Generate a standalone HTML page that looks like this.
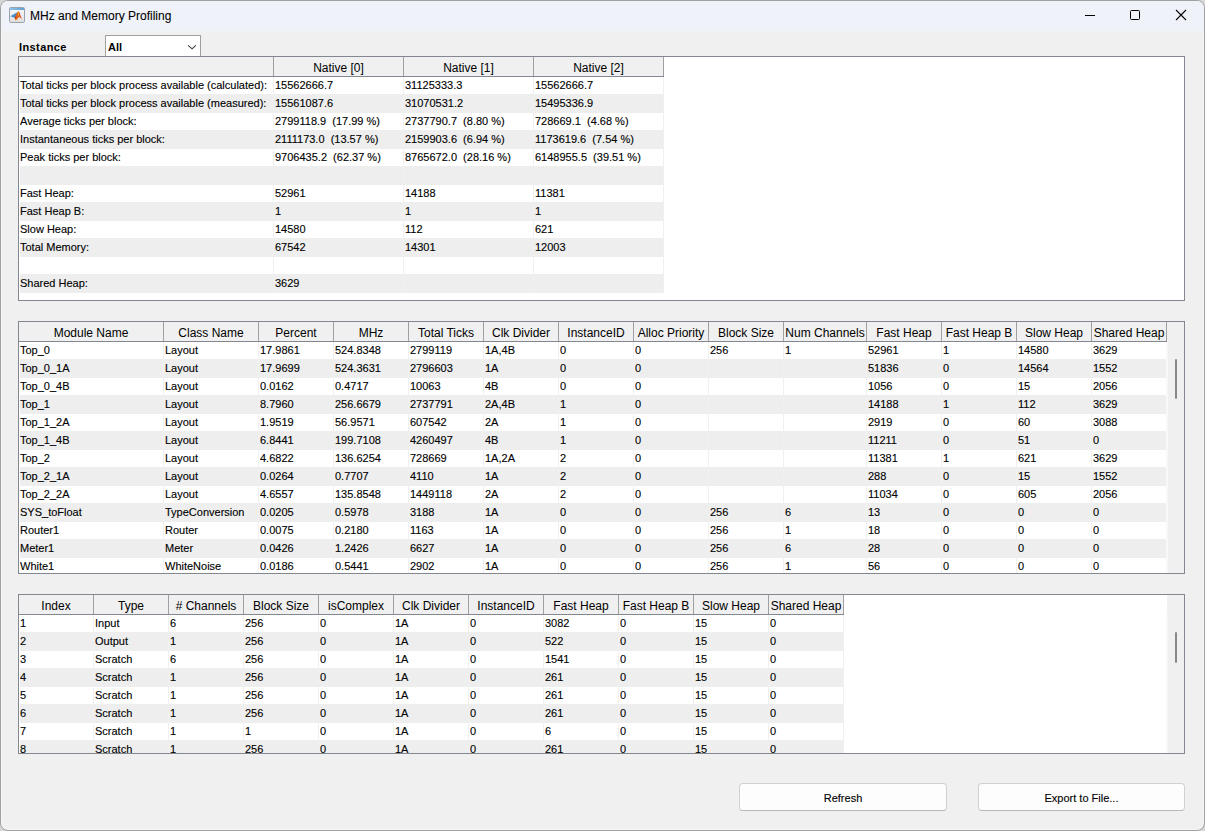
<!DOCTYPE html><html><head><meta charset="utf-8"><style>

html,body{margin:0;padding:0;}
body{width:1205px;height:831px;overflow:hidden;background:#d6d6d6;font-family:"Liberation Sans", sans-serif;position:relative;}
.r{position:absolute;}
.t{position:absolute;white-space:pre;-webkit-text-stroke:0.12px #000;}
.clip{position:absolute;overflow:hidden;}
#win{position:absolute;left:0;top:0;width:1203px;height:829px;border:1px solid #a0a0a0;border-radius:8px;background:#f0f0f0;overflow:hidden;box-shadow:inset 0 0 0 1px #f6f6f6;}

</style></head><body>
<div id="win"></div>
<div class="r" style="left:1px;top:1px;width:1203px;height:30px;background:#eff2f9;border-radius:7px 7px 0 0;"></div>
<svg class="r" style="left:9px;top:7px" width="16" height="16" viewBox="0 0 16 16">
<defs><linearGradient id="bg" x1="0" y1="0" x2="0" y2="1"><stop offset="0" stop-color="#fafafa"/><stop offset="1" stop-color="#dedede"/></linearGradient>
<linearGradient id="tb" x1="0" y1="0" x2="1" y2="0"><stop offset="0" stop-color="#8cc4ea"/><stop offset="1" stop-color="#5d9fd6"/></linearGradient></defs>
<rect x="0.5" y="0.5" width="15" height="15" rx="1.2" fill="url(#bg)" stroke="#9aa3ad"/>
<rect x="1" y="1" width="14" height="2" fill="url(#tb)"/>
<path d="M1.3 9.3 L6.5 6.3 L8.4 5.2 L7.8 9 L5.5 10.8 Z" fill="#3f8fd2"/>
<path d="M5.5 10.8 L8.4 5.2 L9.3 4.3 L10.4 5.6 L11.6 9.5 L12.8 11.8 L11.3 11 L10 9.8 L8.3 12.2 L6.7 13.6 Z" fill="#e0631f"/>
<path d="M9.3 4.3 L10.4 5.6 L11.6 9.5 L12.8 11.8 L11.6 10.6 L10.6 8 Z" fill="#c23a22"/>
<path d="M8.8 4.8 L9.6 4.5 L9.8 8.2 L9 9 Z" fill="#f3c32c"/>
<path d="M5.5 10.8 L7.3 9.2 L6.8 11.8 Z" fill="#a8321e"/>
<path d="M6.2 12.4 L8.3 12.2 L6.8 13.6 Z" fill="#f6b92c"/>
</svg>
<div class="t" style="left:30px;top:10.14px;font-size:12px;font-weight:normal;color:#000;line-height:13.80px;-webkit-text-stroke:0.08px #000;">MHz and Memory Profiling</div>
<div class="r" style="left:1085px;top:15px;width:10px;height:1px;background:#000;"></div>
<div class="r" style="left:1130px;top:10px;width:8px;height:8px;border:1px solid #000;border-radius:1.5px;"></div>
<svg class="r" style="left:1175px;top:9px" width="12" height="12" viewBox="0 0 12 12">
<path d="M1 1 L11 11 M11 1 L1 11" stroke="#000" stroke-width="1.1" fill="none"/></svg>
<div class="t" style="left:19px;top:41.05px;font-size:11px;font-weight:bold;color:#000;line-height:12.65px;letter-spacing:0.4px;-webkit-text-stroke:0;">Instance</div>
<div class="r" style="left:105px;top:35px;width:94px;height:21px;background:#fff;border:1px solid #a0a0a0;border-bottom:none;"></div>
<div class="t" style="left:108px;top:41.05px;font-size:11px;font-weight:bold;color:#000;line-height:12.65px;-webkit-text-stroke:0;">All</div>
<svg class="r" style="left:187px;top:44px" width="11" height="7" viewBox="0 0 11 7">
<path d="M1.1 1.3 L5.1 4.8 L8.8 1.3" stroke="#3a3a3a" stroke-width="1.1" fill="none"/></svg>
<div class="clip" style="left:0;top:0;width:1205px;height:300px;">
<div class="r" style="left:18px;top:56px;width:1167px;height:245px;background:#fff;box-shadow:inset 0 0 0 1px #828790;"></div>
<div class="r" style="left:20px;top:94px;width:644px;height:19px;background:#eeeeee;"></div>
<div class="r" style="left:20px;top:130px;width:644px;height:19px;background:#eeeeee;"></div>
<div class="r" style="left:20px;top:166px;width:644px;height:19px;background:#eeeeee;"></div>
<div class="r" style="left:20px;top:202px;width:644px;height:19px;background:#eeeeee;"></div>
<div class="r" style="left:20px;top:238px;width:644px;height:19px;background:#eeeeee;"></div>
<div class="r" style="left:20px;top:274px;width:644px;height:19px;background:#eeeeee;"></div>
<div class="r" style="left:273px;top:77px;width:1px;height:215px;background:#f0f0f0;"></div>
<div class="r" style="left:403px;top:77px;width:1px;height:215px;background:#f0f0f0;"></div>
<div class="r" style="left:533px;top:77px;width:1px;height:215px;background:#f0f0f0;"></div>
<div class="r" style="left:663px;top:77px;width:1px;height:215px;background:#f0f0f0;"></div>
<div class="r" style="left:19px;top:57px;width:645px;height:19px;background:#f0f0f0;"></div>
<div class="r" style="left:19px;top:76px;width:645px;height:1px;background:#828790;"></div>
<div class="r" style="left:273px;top:57px;width:1px;height:19px;background:#a0a0a0;"></div>
<div class="r" style="left:403px;top:57px;width:1px;height:19px;background:#a0a0a0;"></div>
<div class="r" style="left:533px;top:57px;width:1px;height:19px;background:#a0a0a0;"></div>
<div class="r" style="left:663px;top:57px;width:1px;height:19px;background:#a0a0a0;"></div>
<div class="t" style="left:274px;top:62.14px;font-size:12px;font-weight:normal;color:#000;line-height:13.80px;width:129px;text-align:center;overflow:hidden;-webkit-text-stroke:0;">Native [0]</div>
<div class="t" style="left:404px;top:62.14px;font-size:12px;font-weight:normal;color:#000;line-height:13.80px;width:129px;text-align:center;overflow:hidden;-webkit-text-stroke:0;">Native [1]</div>
<div class="t" style="left:534px;top:62.14px;font-size:12px;font-weight:normal;color:#000;line-height:13.80px;width:129px;text-align:center;overflow:hidden;-webkit-text-stroke:0;">Native [2]</div>
<div class="t" style="left:20px;top:79.05px;font-size:11px;font-weight:normal;color:#000;line-height:12.65px;width:253px;text-align:left;overflow:hidden;">Total ticks per block process available (calculated):</div>
<div class="t" style="left:275px;top:79.05px;font-size:11px;font-weight:normal;color:#000;line-height:12.65px;width:128px;text-align:left;overflow:hidden;">15562666.7</div>
<div class="t" style="left:405px;top:79.05px;font-size:11px;font-weight:normal;color:#000;line-height:12.65px;width:128px;text-align:left;overflow:hidden;">31125333.3</div>
<div class="t" style="left:535px;top:79.05px;font-size:11px;font-weight:normal;color:#000;line-height:12.65px;width:128px;text-align:left;overflow:hidden;">15562666.7</div>
<div class="t" style="left:20px;top:97.05px;font-size:11px;font-weight:normal;color:#000;line-height:12.65px;width:253px;text-align:left;overflow:hidden;">Total ticks per block process available (measured):</div>
<div class="t" style="left:275px;top:97.05px;font-size:11px;font-weight:normal;color:#000;line-height:12.65px;width:128px;text-align:left;overflow:hidden;">15561087.6</div>
<div class="t" style="left:405px;top:97.05px;font-size:11px;font-weight:normal;color:#000;line-height:12.65px;width:128px;text-align:left;overflow:hidden;">31070531.2</div>
<div class="t" style="left:535px;top:97.05px;font-size:11px;font-weight:normal;color:#000;line-height:12.65px;width:128px;text-align:left;overflow:hidden;">15495336.9</div>
<div class="t" style="left:20px;top:115.05px;font-size:11px;font-weight:normal;color:#000;line-height:12.65px;width:253px;text-align:left;overflow:hidden;">Average ticks per block:</div>
<div class="t" style="left:275px;top:115.05px;font-size:11px;font-weight:normal;color:#000;line-height:12.65px;width:128px;text-align:left;overflow:hidden;">2799118.9  (17.99 %)</div>
<div class="t" style="left:405px;top:115.05px;font-size:11px;font-weight:normal;color:#000;line-height:12.65px;width:128px;text-align:left;overflow:hidden;">2737790.7  (8.80 %)</div>
<div class="t" style="left:535px;top:115.05px;font-size:11px;font-weight:normal;color:#000;line-height:12.65px;width:128px;text-align:left;overflow:hidden;">728669.1  (4.68 %)</div>
<div class="t" style="left:20px;top:133.04px;font-size:11px;font-weight:normal;color:#000;line-height:12.65px;width:253px;text-align:left;overflow:hidden;">Instantaneous ticks per block:</div>
<div class="t" style="left:275px;top:133.04px;font-size:11px;font-weight:normal;color:#000;line-height:12.65px;width:128px;text-align:left;overflow:hidden;">2111173.0  (13.57 %)</div>
<div class="t" style="left:405px;top:133.04px;font-size:11px;font-weight:normal;color:#000;line-height:12.65px;width:128px;text-align:left;overflow:hidden;">2159903.6  (6.94 %)</div>
<div class="t" style="left:535px;top:133.04px;font-size:11px;font-weight:normal;color:#000;line-height:12.65px;width:128px;text-align:left;overflow:hidden;">1173619.6  (7.54 %)</div>
<div class="t" style="left:20px;top:151.04px;font-size:11px;font-weight:normal;color:#000;line-height:12.65px;width:253px;text-align:left;overflow:hidden;">Peak ticks per block:</div>
<div class="t" style="left:275px;top:151.04px;font-size:11px;font-weight:normal;color:#000;line-height:12.65px;width:128px;text-align:left;overflow:hidden;">9706435.2  (62.37 %)</div>
<div class="t" style="left:405px;top:151.04px;font-size:11px;font-weight:normal;color:#000;line-height:12.65px;width:128px;text-align:left;overflow:hidden;">8765672.0  (28.16 %)</div>
<div class="t" style="left:535px;top:151.04px;font-size:11px;font-weight:normal;color:#000;line-height:12.65px;width:128px;text-align:left;overflow:hidden;">6148955.5  (39.51 %)</div>
<div class="t" style="left:20px;top:187.04px;font-size:11px;font-weight:normal;color:#000;line-height:12.65px;width:253px;text-align:left;overflow:hidden;">Fast Heap:</div>
<div class="t" style="left:275px;top:187.04px;font-size:11px;font-weight:normal;color:#000;line-height:12.65px;width:128px;text-align:left;overflow:hidden;">52961</div>
<div class="t" style="left:405px;top:187.04px;font-size:11px;font-weight:normal;color:#000;line-height:12.65px;width:128px;text-align:left;overflow:hidden;">14188</div>
<div class="t" style="left:535px;top:187.04px;font-size:11px;font-weight:normal;color:#000;line-height:12.65px;width:128px;text-align:left;overflow:hidden;">11381</div>
<div class="t" style="left:20px;top:205.04px;font-size:11px;font-weight:normal;color:#000;line-height:12.65px;width:253px;text-align:left;overflow:hidden;">Fast Heap B:</div>
<div class="t" style="left:275px;top:205.04px;font-size:11px;font-weight:normal;color:#000;line-height:12.65px;width:128px;text-align:left;overflow:hidden;">1</div>
<div class="t" style="left:405px;top:205.04px;font-size:11px;font-weight:normal;color:#000;line-height:12.65px;width:128px;text-align:left;overflow:hidden;">1</div>
<div class="t" style="left:535px;top:205.04px;font-size:11px;font-weight:normal;color:#000;line-height:12.65px;width:128px;text-align:left;overflow:hidden;">1</div>
<div class="t" style="left:20px;top:223.04px;font-size:11px;font-weight:normal;color:#000;line-height:12.65px;width:253px;text-align:left;overflow:hidden;">Slow Heap:</div>
<div class="t" style="left:275px;top:223.04px;font-size:11px;font-weight:normal;color:#000;line-height:12.65px;width:128px;text-align:left;overflow:hidden;">14580</div>
<div class="t" style="left:405px;top:223.04px;font-size:11px;font-weight:normal;color:#000;line-height:12.65px;width:128px;text-align:left;overflow:hidden;">112</div>
<div class="t" style="left:535px;top:223.04px;font-size:11px;font-weight:normal;color:#000;line-height:12.65px;width:128px;text-align:left;overflow:hidden;">621</div>
<div class="t" style="left:20px;top:241.04px;font-size:11px;font-weight:normal;color:#000;line-height:12.65px;width:253px;text-align:left;overflow:hidden;">Total Memory:</div>
<div class="t" style="left:275px;top:241.04px;font-size:11px;font-weight:normal;color:#000;line-height:12.65px;width:128px;text-align:left;overflow:hidden;">67542</div>
<div class="t" style="left:405px;top:241.04px;font-size:11px;font-weight:normal;color:#000;line-height:12.65px;width:128px;text-align:left;overflow:hidden;">14301</div>
<div class="t" style="left:535px;top:241.04px;font-size:11px;font-weight:normal;color:#000;line-height:12.65px;width:128px;text-align:left;overflow:hidden;">12003</div>
<div class="t" style="left:20px;top:277.05px;font-size:11px;font-weight:normal;color:#000;line-height:12.65px;width:253px;text-align:left;overflow:hidden;">Shared Heap:</div>
<div class="t" style="left:275px;top:277.05px;font-size:11px;font-weight:normal;color:#000;line-height:12.65px;width:128px;text-align:left;overflow:hidden;">3629</div>
</div>
<div class="r" style="left:18px;top:300px;width:1167px;height:1px;background:#828790;"></div>
<div class="clip" style="left:0;top:0;width:1205px;height:573px;">
<div class="r" style="left:18px;top:321px;width:1167px;height:253px;background:#fff;box-shadow:inset 0 0 0 1px #828790;"></div>
<div class="r" style="left:20px;top:359px;width:1147px;height:19px;background:#eeeeee;"></div>
<div class="r" style="left:20px;top:395px;width:1147px;height:19px;background:#eeeeee;"></div>
<div class="r" style="left:20px;top:431px;width:1147px;height:19px;background:#eeeeee;"></div>
<div class="r" style="left:20px;top:467px;width:1147px;height:19px;background:#eeeeee;"></div>
<div class="r" style="left:20px;top:503px;width:1147px;height:19px;background:#eeeeee;"></div>
<div class="r" style="left:20px;top:539px;width:1147px;height:19px;background:#eeeeee;"></div>
<div class="r" style="left:163px;top:342px;width:1px;height:231px;background:#f0f0f0;"></div>
<div class="r" style="left:258px;top:342px;width:1px;height:231px;background:#f0f0f0;"></div>
<div class="r" style="left:333px;top:342px;width:1px;height:231px;background:#f0f0f0;"></div>
<div class="r" style="left:408px;top:342px;width:1px;height:231px;background:#f0f0f0;"></div>
<div class="r" style="left:483px;top:342px;width:1px;height:231px;background:#f0f0f0;"></div>
<div class="r" style="left:558px;top:342px;width:1px;height:231px;background:#f0f0f0;"></div>
<div class="r" style="left:633px;top:342px;width:1px;height:231px;background:#f0f0f0;"></div>
<div class="r" style="left:708px;top:342px;width:1px;height:231px;background:#f0f0f0;"></div>
<div class="r" style="left:783px;top:342px;width:1px;height:231px;background:#f0f0f0;"></div>
<div class="r" style="left:866px;top:342px;width:1px;height:231px;background:#f0f0f0;"></div>
<div class="r" style="left:941px;top:342px;width:1px;height:231px;background:#f0f0f0;"></div>
<div class="r" style="left:1016px;top:342px;width:1px;height:231px;background:#f0f0f0;"></div>
<div class="r" style="left:1091px;top:342px;width:1px;height:231px;background:#f0f0f0;"></div>
<div class="r" style="left:1166px;top:342px;width:1px;height:231px;background:#f0f0f0;"></div>
<div class="r" style="left:19px;top:322px;width:1148px;height:19px;background:#f0f0f0;"></div>
<div class="r" style="left:19px;top:341px;width:1148px;height:1px;background:#828790;"></div>
<div class="r" style="left:163px;top:322px;width:1px;height:19px;background:#a0a0a0;"></div>
<div class="r" style="left:258px;top:322px;width:1px;height:19px;background:#a0a0a0;"></div>
<div class="r" style="left:333px;top:322px;width:1px;height:19px;background:#a0a0a0;"></div>
<div class="r" style="left:408px;top:322px;width:1px;height:19px;background:#a0a0a0;"></div>
<div class="r" style="left:483px;top:322px;width:1px;height:19px;background:#a0a0a0;"></div>
<div class="r" style="left:558px;top:322px;width:1px;height:19px;background:#a0a0a0;"></div>
<div class="r" style="left:633px;top:322px;width:1px;height:19px;background:#a0a0a0;"></div>
<div class="r" style="left:708px;top:322px;width:1px;height:19px;background:#a0a0a0;"></div>
<div class="r" style="left:783px;top:322px;width:1px;height:19px;background:#a0a0a0;"></div>
<div class="r" style="left:866px;top:322px;width:1px;height:19px;background:#a0a0a0;"></div>
<div class="r" style="left:941px;top:322px;width:1px;height:19px;background:#a0a0a0;"></div>
<div class="r" style="left:1016px;top:322px;width:1px;height:19px;background:#a0a0a0;"></div>
<div class="r" style="left:1091px;top:322px;width:1px;height:19px;background:#a0a0a0;"></div>
<div class="r" style="left:1166px;top:322px;width:1px;height:19px;background:#a0a0a0;"></div>
<div class="t" style="left:19px;top:327.14px;font-size:12px;font-weight:normal;color:#000;line-height:13.80px;width:144px;text-align:center;overflow:hidden;-webkit-text-stroke:0;">Module Name</div>
<div class="t" style="left:164px;top:327.14px;font-size:12px;font-weight:normal;color:#000;line-height:13.80px;width:94px;text-align:center;overflow:hidden;-webkit-text-stroke:0;">Class Name</div>
<div class="t" style="left:259px;top:327.14px;font-size:12px;font-weight:normal;color:#000;line-height:13.80px;width:74px;text-align:center;overflow:hidden;-webkit-text-stroke:0;">Percent</div>
<div class="t" style="left:334px;top:327.14px;font-size:12px;font-weight:normal;color:#000;line-height:13.80px;width:74px;text-align:center;overflow:hidden;-webkit-text-stroke:0;">MHz</div>
<div class="t" style="left:409px;top:327.14px;font-size:12px;font-weight:normal;color:#000;line-height:13.80px;width:74px;text-align:center;overflow:hidden;-webkit-text-stroke:0;">Total Ticks</div>
<div class="t" style="left:484px;top:327.14px;font-size:12px;font-weight:normal;color:#000;line-height:13.80px;width:74px;text-align:center;overflow:hidden;-webkit-text-stroke:0;">Clk Divider</div>
<div class="t" style="left:559px;top:327.14px;font-size:12px;font-weight:normal;color:#000;line-height:13.80px;width:74px;text-align:center;overflow:hidden;-webkit-text-stroke:0;">InstanceID</div>
<div class="t" style="left:634px;top:327.14px;font-size:12px;font-weight:normal;color:#000;line-height:13.80px;width:74px;text-align:center;overflow:hidden;-webkit-text-stroke:0;">Alloc Priority</div>
<div class="t" style="left:709px;top:327.14px;font-size:12px;font-weight:normal;color:#000;line-height:13.80px;width:74px;text-align:center;overflow:hidden;-webkit-text-stroke:0;">Block Size</div>
<div class="t" style="left:784px;top:327.14px;font-size:12px;font-weight:normal;color:#000;line-height:13.80px;width:82px;text-align:center;overflow:hidden;-webkit-text-stroke:0;">Num Channels</div>
<div class="t" style="left:867px;top:327.14px;font-size:12px;font-weight:normal;color:#000;line-height:13.80px;width:74px;text-align:center;overflow:hidden;-webkit-text-stroke:0;">Fast Heap</div>
<div class="t" style="left:942px;top:327.14px;font-size:12px;font-weight:normal;color:#000;line-height:13.80px;width:74px;text-align:center;overflow:hidden;-webkit-text-stroke:0;">Fast Heap B</div>
<div class="t" style="left:1017px;top:327.14px;font-size:12px;font-weight:normal;color:#000;line-height:13.80px;width:74px;text-align:center;overflow:hidden;-webkit-text-stroke:0;">Slow Heap</div>
<div class="t" style="left:1092px;top:327.14px;font-size:12px;font-weight:normal;color:#000;line-height:13.80px;width:74px;text-align:center;overflow:hidden;-webkit-text-stroke:0;">Shared Heap</div>
<div class="t" style="left:20px;top:344.05px;font-size:11px;font-weight:normal;color:#000;line-height:12.65px;width:143px;text-align:left;overflow:hidden;">Top_0</div>
<div class="t" style="left:165px;top:344.05px;font-size:11px;font-weight:normal;color:#000;line-height:12.65px;width:93px;text-align:left;overflow:hidden;">Layout</div>
<div class="t" style="left:260px;top:344.05px;font-size:11px;font-weight:normal;color:#000;line-height:12.65px;width:73px;text-align:left;overflow:hidden;">17.9861</div>
<div class="t" style="left:335px;top:344.05px;font-size:11px;font-weight:normal;color:#000;line-height:12.65px;width:73px;text-align:left;overflow:hidden;">524.8348</div>
<div class="t" style="left:410px;top:344.05px;font-size:11px;font-weight:normal;color:#000;line-height:12.65px;width:73px;text-align:left;overflow:hidden;">2799119</div>
<div class="t" style="left:485px;top:344.05px;font-size:11px;font-weight:normal;color:#000;line-height:12.65px;width:73px;text-align:left;overflow:hidden;">1A,4B</div>
<div class="t" style="left:560px;top:344.05px;font-size:11px;font-weight:normal;color:#000;line-height:12.65px;width:73px;text-align:left;overflow:hidden;">0</div>
<div class="t" style="left:635px;top:344.05px;font-size:11px;font-weight:normal;color:#000;line-height:12.65px;width:73px;text-align:left;overflow:hidden;">0</div>
<div class="t" style="left:710px;top:344.05px;font-size:11px;font-weight:normal;color:#000;line-height:12.65px;width:73px;text-align:left;overflow:hidden;">256</div>
<div class="t" style="left:785px;top:344.05px;font-size:11px;font-weight:normal;color:#000;line-height:12.65px;width:81px;text-align:left;overflow:hidden;">1</div>
<div class="t" style="left:868px;top:344.05px;font-size:11px;font-weight:normal;color:#000;line-height:12.65px;width:73px;text-align:left;overflow:hidden;">52961</div>
<div class="t" style="left:943px;top:344.05px;font-size:11px;font-weight:normal;color:#000;line-height:12.65px;width:73px;text-align:left;overflow:hidden;">1</div>
<div class="t" style="left:1018px;top:344.05px;font-size:11px;font-weight:normal;color:#000;line-height:12.65px;width:73px;text-align:left;overflow:hidden;">14580</div>
<div class="t" style="left:1093px;top:344.05px;font-size:11px;font-weight:normal;color:#000;line-height:12.65px;width:73px;text-align:left;overflow:hidden;">3629</div>
<div class="t" style="left:20px;top:362.05px;font-size:11px;font-weight:normal;color:#000;line-height:12.65px;width:143px;text-align:left;overflow:hidden;">Top_0_1A</div>
<div class="t" style="left:165px;top:362.05px;font-size:11px;font-weight:normal;color:#000;line-height:12.65px;width:93px;text-align:left;overflow:hidden;">Layout</div>
<div class="t" style="left:260px;top:362.05px;font-size:11px;font-weight:normal;color:#000;line-height:12.65px;width:73px;text-align:left;overflow:hidden;">17.9699</div>
<div class="t" style="left:335px;top:362.05px;font-size:11px;font-weight:normal;color:#000;line-height:12.65px;width:73px;text-align:left;overflow:hidden;">524.3631</div>
<div class="t" style="left:410px;top:362.05px;font-size:11px;font-weight:normal;color:#000;line-height:12.65px;width:73px;text-align:left;overflow:hidden;">2796603</div>
<div class="t" style="left:485px;top:362.05px;font-size:11px;font-weight:normal;color:#000;line-height:12.65px;width:73px;text-align:left;overflow:hidden;">1A</div>
<div class="t" style="left:560px;top:362.05px;font-size:11px;font-weight:normal;color:#000;line-height:12.65px;width:73px;text-align:left;overflow:hidden;">0</div>
<div class="t" style="left:635px;top:362.05px;font-size:11px;font-weight:normal;color:#000;line-height:12.65px;width:73px;text-align:left;overflow:hidden;">0</div>
<div class="t" style="left:868px;top:362.05px;font-size:11px;font-weight:normal;color:#000;line-height:12.65px;width:73px;text-align:left;overflow:hidden;">51836</div>
<div class="t" style="left:943px;top:362.05px;font-size:11px;font-weight:normal;color:#000;line-height:12.65px;width:73px;text-align:left;overflow:hidden;">0</div>
<div class="t" style="left:1018px;top:362.05px;font-size:11px;font-weight:normal;color:#000;line-height:12.65px;width:73px;text-align:left;overflow:hidden;">14564</div>
<div class="t" style="left:1093px;top:362.05px;font-size:11px;font-weight:normal;color:#000;line-height:12.65px;width:73px;text-align:left;overflow:hidden;">1552</div>
<div class="t" style="left:20px;top:380.05px;font-size:11px;font-weight:normal;color:#000;line-height:12.65px;width:143px;text-align:left;overflow:hidden;">Top_0_4B</div>
<div class="t" style="left:165px;top:380.05px;font-size:11px;font-weight:normal;color:#000;line-height:12.65px;width:93px;text-align:left;overflow:hidden;">Layout</div>
<div class="t" style="left:260px;top:380.05px;font-size:11px;font-weight:normal;color:#000;line-height:12.65px;width:73px;text-align:left;overflow:hidden;">0.0162</div>
<div class="t" style="left:335px;top:380.05px;font-size:11px;font-weight:normal;color:#000;line-height:12.65px;width:73px;text-align:left;overflow:hidden;">0.4717</div>
<div class="t" style="left:410px;top:380.05px;font-size:11px;font-weight:normal;color:#000;line-height:12.65px;width:73px;text-align:left;overflow:hidden;">10063</div>
<div class="t" style="left:485px;top:380.05px;font-size:11px;font-weight:normal;color:#000;line-height:12.65px;width:73px;text-align:left;overflow:hidden;">4B</div>
<div class="t" style="left:560px;top:380.05px;font-size:11px;font-weight:normal;color:#000;line-height:12.65px;width:73px;text-align:left;overflow:hidden;">0</div>
<div class="t" style="left:635px;top:380.05px;font-size:11px;font-weight:normal;color:#000;line-height:12.65px;width:73px;text-align:left;overflow:hidden;">0</div>
<div class="t" style="left:868px;top:380.05px;font-size:11px;font-weight:normal;color:#000;line-height:12.65px;width:73px;text-align:left;overflow:hidden;">1056</div>
<div class="t" style="left:943px;top:380.05px;font-size:11px;font-weight:normal;color:#000;line-height:12.65px;width:73px;text-align:left;overflow:hidden;">0</div>
<div class="t" style="left:1018px;top:380.05px;font-size:11px;font-weight:normal;color:#000;line-height:12.65px;width:73px;text-align:left;overflow:hidden;">15</div>
<div class="t" style="left:1093px;top:380.05px;font-size:11px;font-weight:normal;color:#000;line-height:12.65px;width:73px;text-align:left;overflow:hidden;">2056</div>
<div class="t" style="left:20px;top:398.05px;font-size:11px;font-weight:normal;color:#000;line-height:12.65px;width:143px;text-align:left;overflow:hidden;">Top_1</div>
<div class="t" style="left:165px;top:398.05px;font-size:11px;font-weight:normal;color:#000;line-height:12.65px;width:93px;text-align:left;overflow:hidden;">Layout</div>
<div class="t" style="left:260px;top:398.05px;font-size:11px;font-weight:normal;color:#000;line-height:12.65px;width:73px;text-align:left;overflow:hidden;">8.7960</div>
<div class="t" style="left:335px;top:398.05px;font-size:11px;font-weight:normal;color:#000;line-height:12.65px;width:73px;text-align:left;overflow:hidden;">256.6679</div>
<div class="t" style="left:410px;top:398.05px;font-size:11px;font-weight:normal;color:#000;line-height:12.65px;width:73px;text-align:left;overflow:hidden;">2737791</div>
<div class="t" style="left:485px;top:398.05px;font-size:11px;font-weight:normal;color:#000;line-height:12.65px;width:73px;text-align:left;overflow:hidden;">2A,4B</div>
<div class="t" style="left:560px;top:398.05px;font-size:11px;font-weight:normal;color:#000;line-height:12.65px;width:73px;text-align:left;overflow:hidden;">1</div>
<div class="t" style="left:635px;top:398.05px;font-size:11px;font-weight:normal;color:#000;line-height:12.65px;width:73px;text-align:left;overflow:hidden;">0</div>
<div class="t" style="left:868px;top:398.05px;font-size:11px;font-weight:normal;color:#000;line-height:12.65px;width:73px;text-align:left;overflow:hidden;">14188</div>
<div class="t" style="left:943px;top:398.05px;font-size:11px;font-weight:normal;color:#000;line-height:12.65px;width:73px;text-align:left;overflow:hidden;">1</div>
<div class="t" style="left:1018px;top:398.05px;font-size:11px;font-weight:normal;color:#000;line-height:12.65px;width:73px;text-align:left;overflow:hidden;">112</div>
<div class="t" style="left:1093px;top:398.05px;font-size:11px;font-weight:normal;color:#000;line-height:12.65px;width:73px;text-align:left;overflow:hidden;">3629</div>
<div class="t" style="left:20px;top:416.05px;font-size:11px;font-weight:normal;color:#000;line-height:12.65px;width:143px;text-align:left;overflow:hidden;">Top_1_2A</div>
<div class="t" style="left:165px;top:416.05px;font-size:11px;font-weight:normal;color:#000;line-height:12.65px;width:93px;text-align:left;overflow:hidden;">Layout</div>
<div class="t" style="left:260px;top:416.05px;font-size:11px;font-weight:normal;color:#000;line-height:12.65px;width:73px;text-align:left;overflow:hidden;">1.9519</div>
<div class="t" style="left:335px;top:416.05px;font-size:11px;font-weight:normal;color:#000;line-height:12.65px;width:73px;text-align:left;overflow:hidden;">56.9571</div>
<div class="t" style="left:410px;top:416.05px;font-size:11px;font-weight:normal;color:#000;line-height:12.65px;width:73px;text-align:left;overflow:hidden;">607542</div>
<div class="t" style="left:485px;top:416.05px;font-size:11px;font-weight:normal;color:#000;line-height:12.65px;width:73px;text-align:left;overflow:hidden;">2A</div>
<div class="t" style="left:560px;top:416.05px;font-size:11px;font-weight:normal;color:#000;line-height:12.65px;width:73px;text-align:left;overflow:hidden;">1</div>
<div class="t" style="left:635px;top:416.05px;font-size:11px;font-weight:normal;color:#000;line-height:12.65px;width:73px;text-align:left;overflow:hidden;">0</div>
<div class="t" style="left:868px;top:416.05px;font-size:11px;font-weight:normal;color:#000;line-height:12.65px;width:73px;text-align:left;overflow:hidden;">2919</div>
<div class="t" style="left:943px;top:416.05px;font-size:11px;font-weight:normal;color:#000;line-height:12.65px;width:73px;text-align:left;overflow:hidden;">0</div>
<div class="t" style="left:1018px;top:416.05px;font-size:11px;font-weight:normal;color:#000;line-height:12.65px;width:73px;text-align:left;overflow:hidden;">60</div>
<div class="t" style="left:1093px;top:416.05px;font-size:11px;font-weight:normal;color:#000;line-height:12.65px;width:73px;text-align:left;overflow:hidden;">3088</div>
<div class="t" style="left:20px;top:434.05px;font-size:11px;font-weight:normal;color:#000;line-height:12.65px;width:143px;text-align:left;overflow:hidden;">Top_1_4B</div>
<div class="t" style="left:165px;top:434.05px;font-size:11px;font-weight:normal;color:#000;line-height:12.65px;width:93px;text-align:left;overflow:hidden;">Layout</div>
<div class="t" style="left:260px;top:434.05px;font-size:11px;font-weight:normal;color:#000;line-height:12.65px;width:73px;text-align:left;overflow:hidden;">6.8441</div>
<div class="t" style="left:335px;top:434.05px;font-size:11px;font-weight:normal;color:#000;line-height:12.65px;width:73px;text-align:left;overflow:hidden;">199.7108</div>
<div class="t" style="left:410px;top:434.05px;font-size:11px;font-weight:normal;color:#000;line-height:12.65px;width:73px;text-align:left;overflow:hidden;">4260497</div>
<div class="t" style="left:485px;top:434.05px;font-size:11px;font-weight:normal;color:#000;line-height:12.65px;width:73px;text-align:left;overflow:hidden;">4B</div>
<div class="t" style="left:560px;top:434.05px;font-size:11px;font-weight:normal;color:#000;line-height:12.65px;width:73px;text-align:left;overflow:hidden;">1</div>
<div class="t" style="left:635px;top:434.05px;font-size:11px;font-weight:normal;color:#000;line-height:12.65px;width:73px;text-align:left;overflow:hidden;">0</div>
<div class="t" style="left:868px;top:434.05px;font-size:11px;font-weight:normal;color:#000;line-height:12.65px;width:73px;text-align:left;overflow:hidden;">11211</div>
<div class="t" style="left:943px;top:434.05px;font-size:11px;font-weight:normal;color:#000;line-height:12.65px;width:73px;text-align:left;overflow:hidden;">0</div>
<div class="t" style="left:1018px;top:434.05px;font-size:11px;font-weight:normal;color:#000;line-height:12.65px;width:73px;text-align:left;overflow:hidden;">51</div>
<div class="t" style="left:1093px;top:434.05px;font-size:11px;font-weight:normal;color:#000;line-height:12.65px;width:73px;text-align:left;overflow:hidden;">0</div>
<div class="t" style="left:20px;top:452.05px;font-size:11px;font-weight:normal;color:#000;line-height:12.65px;width:143px;text-align:left;overflow:hidden;">Top_2</div>
<div class="t" style="left:165px;top:452.05px;font-size:11px;font-weight:normal;color:#000;line-height:12.65px;width:93px;text-align:left;overflow:hidden;">Layout</div>
<div class="t" style="left:260px;top:452.05px;font-size:11px;font-weight:normal;color:#000;line-height:12.65px;width:73px;text-align:left;overflow:hidden;">4.6822</div>
<div class="t" style="left:335px;top:452.05px;font-size:11px;font-weight:normal;color:#000;line-height:12.65px;width:73px;text-align:left;overflow:hidden;">136.6254</div>
<div class="t" style="left:410px;top:452.05px;font-size:11px;font-weight:normal;color:#000;line-height:12.65px;width:73px;text-align:left;overflow:hidden;">728669</div>
<div class="t" style="left:485px;top:452.05px;font-size:11px;font-weight:normal;color:#000;line-height:12.65px;width:73px;text-align:left;overflow:hidden;">1A,2A</div>
<div class="t" style="left:560px;top:452.05px;font-size:11px;font-weight:normal;color:#000;line-height:12.65px;width:73px;text-align:left;overflow:hidden;">2</div>
<div class="t" style="left:635px;top:452.05px;font-size:11px;font-weight:normal;color:#000;line-height:12.65px;width:73px;text-align:left;overflow:hidden;">0</div>
<div class="t" style="left:868px;top:452.05px;font-size:11px;font-weight:normal;color:#000;line-height:12.65px;width:73px;text-align:left;overflow:hidden;">11381</div>
<div class="t" style="left:943px;top:452.05px;font-size:11px;font-weight:normal;color:#000;line-height:12.65px;width:73px;text-align:left;overflow:hidden;">1</div>
<div class="t" style="left:1018px;top:452.05px;font-size:11px;font-weight:normal;color:#000;line-height:12.65px;width:73px;text-align:left;overflow:hidden;">621</div>
<div class="t" style="left:1093px;top:452.05px;font-size:11px;font-weight:normal;color:#000;line-height:12.65px;width:73px;text-align:left;overflow:hidden;">3629</div>
<div class="t" style="left:20px;top:470.05px;font-size:11px;font-weight:normal;color:#000;line-height:12.65px;width:143px;text-align:left;overflow:hidden;">Top_2_1A</div>
<div class="t" style="left:165px;top:470.05px;font-size:11px;font-weight:normal;color:#000;line-height:12.65px;width:93px;text-align:left;overflow:hidden;">Layout</div>
<div class="t" style="left:260px;top:470.05px;font-size:11px;font-weight:normal;color:#000;line-height:12.65px;width:73px;text-align:left;overflow:hidden;">0.0264</div>
<div class="t" style="left:335px;top:470.05px;font-size:11px;font-weight:normal;color:#000;line-height:12.65px;width:73px;text-align:left;overflow:hidden;">0.7707</div>
<div class="t" style="left:410px;top:470.05px;font-size:11px;font-weight:normal;color:#000;line-height:12.65px;width:73px;text-align:left;overflow:hidden;">4110</div>
<div class="t" style="left:485px;top:470.05px;font-size:11px;font-weight:normal;color:#000;line-height:12.65px;width:73px;text-align:left;overflow:hidden;">1A</div>
<div class="t" style="left:560px;top:470.05px;font-size:11px;font-weight:normal;color:#000;line-height:12.65px;width:73px;text-align:left;overflow:hidden;">2</div>
<div class="t" style="left:635px;top:470.05px;font-size:11px;font-weight:normal;color:#000;line-height:12.65px;width:73px;text-align:left;overflow:hidden;">0</div>
<div class="t" style="left:868px;top:470.05px;font-size:11px;font-weight:normal;color:#000;line-height:12.65px;width:73px;text-align:left;overflow:hidden;">288</div>
<div class="t" style="left:943px;top:470.05px;font-size:11px;font-weight:normal;color:#000;line-height:12.65px;width:73px;text-align:left;overflow:hidden;">0</div>
<div class="t" style="left:1018px;top:470.05px;font-size:11px;font-weight:normal;color:#000;line-height:12.65px;width:73px;text-align:left;overflow:hidden;">15</div>
<div class="t" style="left:1093px;top:470.05px;font-size:11px;font-weight:normal;color:#000;line-height:12.65px;width:73px;text-align:left;overflow:hidden;">1552</div>
<div class="t" style="left:20px;top:488.05px;font-size:11px;font-weight:normal;color:#000;line-height:12.65px;width:143px;text-align:left;overflow:hidden;">Top_2_2A</div>
<div class="t" style="left:165px;top:488.05px;font-size:11px;font-weight:normal;color:#000;line-height:12.65px;width:93px;text-align:left;overflow:hidden;">Layout</div>
<div class="t" style="left:260px;top:488.05px;font-size:11px;font-weight:normal;color:#000;line-height:12.65px;width:73px;text-align:left;overflow:hidden;">4.6557</div>
<div class="t" style="left:335px;top:488.05px;font-size:11px;font-weight:normal;color:#000;line-height:12.65px;width:73px;text-align:left;overflow:hidden;">135.8548</div>
<div class="t" style="left:410px;top:488.05px;font-size:11px;font-weight:normal;color:#000;line-height:12.65px;width:73px;text-align:left;overflow:hidden;">1449118</div>
<div class="t" style="left:485px;top:488.05px;font-size:11px;font-weight:normal;color:#000;line-height:12.65px;width:73px;text-align:left;overflow:hidden;">2A</div>
<div class="t" style="left:560px;top:488.05px;font-size:11px;font-weight:normal;color:#000;line-height:12.65px;width:73px;text-align:left;overflow:hidden;">2</div>
<div class="t" style="left:635px;top:488.05px;font-size:11px;font-weight:normal;color:#000;line-height:12.65px;width:73px;text-align:left;overflow:hidden;">0</div>
<div class="t" style="left:868px;top:488.05px;font-size:11px;font-weight:normal;color:#000;line-height:12.65px;width:73px;text-align:left;overflow:hidden;">11034</div>
<div class="t" style="left:943px;top:488.05px;font-size:11px;font-weight:normal;color:#000;line-height:12.65px;width:73px;text-align:left;overflow:hidden;">0</div>
<div class="t" style="left:1018px;top:488.05px;font-size:11px;font-weight:normal;color:#000;line-height:12.65px;width:73px;text-align:left;overflow:hidden;">605</div>
<div class="t" style="left:1093px;top:488.05px;font-size:11px;font-weight:normal;color:#000;line-height:12.65px;width:73px;text-align:left;overflow:hidden;">2056</div>
<div class="t" style="left:20px;top:506.05px;font-size:11px;font-weight:normal;color:#000;line-height:12.65px;width:143px;text-align:left;overflow:hidden;">SYS_toFloat</div>
<div class="t" style="left:165px;top:506.05px;font-size:11px;font-weight:normal;color:#000;line-height:12.65px;width:93px;text-align:left;overflow:hidden;">TypeConversion</div>
<div class="t" style="left:260px;top:506.05px;font-size:11px;font-weight:normal;color:#000;line-height:12.65px;width:73px;text-align:left;overflow:hidden;">0.0205</div>
<div class="t" style="left:335px;top:506.05px;font-size:11px;font-weight:normal;color:#000;line-height:12.65px;width:73px;text-align:left;overflow:hidden;">0.5978</div>
<div class="t" style="left:410px;top:506.05px;font-size:11px;font-weight:normal;color:#000;line-height:12.65px;width:73px;text-align:left;overflow:hidden;">3188</div>
<div class="t" style="left:485px;top:506.05px;font-size:11px;font-weight:normal;color:#000;line-height:12.65px;width:73px;text-align:left;overflow:hidden;">1A</div>
<div class="t" style="left:560px;top:506.05px;font-size:11px;font-weight:normal;color:#000;line-height:12.65px;width:73px;text-align:left;overflow:hidden;">0</div>
<div class="t" style="left:635px;top:506.05px;font-size:11px;font-weight:normal;color:#000;line-height:12.65px;width:73px;text-align:left;overflow:hidden;">0</div>
<div class="t" style="left:710px;top:506.05px;font-size:11px;font-weight:normal;color:#000;line-height:12.65px;width:73px;text-align:left;overflow:hidden;">256</div>
<div class="t" style="left:785px;top:506.05px;font-size:11px;font-weight:normal;color:#000;line-height:12.65px;width:81px;text-align:left;overflow:hidden;">6</div>
<div class="t" style="left:868px;top:506.05px;font-size:11px;font-weight:normal;color:#000;line-height:12.65px;width:73px;text-align:left;overflow:hidden;">13</div>
<div class="t" style="left:943px;top:506.05px;font-size:11px;font-weight:normal;color:#000;line-height:12.65px;width:73px;text-align:left;overflow:hidden;">0</div>
<div class="t" style="left:1018px;top:506.05px;font-size:11px;font-weight:normal;color:#000;line-height:12.65px;width:73px;text-align:left;overflow:hidden;">0</div>
<div class="t" style="left:1093px;top:506.05px;font-size:11px;font-weight:normal;color:#000;line-height:12.65px;width:73px;text-align:left;overflow:hidden;">0</div>
<div class="t" style="left:20px;top:524.04px;font-size:11px;font-weight:normal;color:#000;line-height:12.65px;width:143px;text-align:left;overflow:hidden;">Router1</div>
<div class="t" style="left:165px;top:524.04px;font-size:11px;font-weight:normal;color:#000;line-height:12.65px;width:93px;text-align:left;overflow:hidden;">Router</div>
<div class="t" style="left:260px;top:524.04px;font-size:11px;font-weight:normal;color:#000;line-height:12.65px;width:73px;text-align:left;overflow:hidden;">0.0075</div>
<div class="t" style="left:335px;top:524.04px;font-size:11px;font-weight:normal;color:#000;line-height:12.65px;width:73px;text-align:left;overflow:hidden;">0.2180</div>
<div class="t" style="left:410px;top:524.04px;font-size:11px;font-weight:normal;color:#000;line-height:12.65px;width:73px;text-align:left;overflow:hidden;">1163</div>
<div class="t" style="left:485px;top:524.04px;font-size:11px;font-weight:normal;color:#000;line-height:12.65px;width:73px;text-align:left;overflow:hidden;">1A</div>
<div class="t" style="left:560px;top:524.04px;font-size:11px;font-weight:normal;color:#000;line-height:12.65px;width:73px;text-align:left;overflow:hidden;">0</div>
<div class="t" style="left:635px;top:524.04px;font-size:11px;font-weight:normal;color:#000;line-height:12.65px;width:73px;text-align:left;overflow:hidden;">0</div>
<div class="t" style="left:710px;top:524.04px;font-size:11px;font-weight:normal;color:#000;line-height:12.65px;width:73px;text-align:left;overflow:hidden;">256</div>
<div class="t" style="left:785px;top:524.04px;font-size:11px;font-weight:normal;color:#000;line-height:12.65px;width:81px;text-align:left;overflow:hidden;">1</div>
<div class="t" style="left:868px;top:524.04px;font-size:11px;font-weight:normal;color:#000;line-height:12.65px;width:73px;text-align:left;overflow:hidden;">18</div>
<div class="t" style="left:943px;top:524.04px;font-size:11px;font-weight:normal;color:#000;line-height:12.65px;width:73px;text-align:left;overflow:hidden;">0</div>
<div class="t" style="left:1018px;top:524.04px;font-size:11px;font-weight:normal;color:#000;line-height:12.65px;width:73px;text-align:left;overflow:hidden;">0</div>
<div class="t" style="left:1093px;top:524.04px;font-size:11px;font-weight:normal;color:#000;line-height:12.65px;width:73px;text-align:left;overflow:hidden;">0</div>
<div class="t" style="left:20px;top:542.04px;font-size:11px;font-weight:normal;color:#000;line-height:12.65px;width:143px;text-align:left;overflow:hidden;">Meter1</div>
<div class="t" style="left:165px;top:542.04px;font-size:11px;font-weight:normal;color:#000;line-height:12.65px;width:93px;text-align:left;overflow:hidden;">Meter</div>
<div class="t" style="left:260px;top:542.04px;font-size:11px;font-weight:normal;color:#000;line-height:12.65px;width:73px;text-align:left;overflow:hidden;">0.0426</div>
<div class="t" style="left:335px;top:542.04px;font-size:11px;font-weight:normal;color:#000;line-height:12.65px;width:73px;text-align:left;overflow:hidden;">1.2426</div>
<div class="t" style="left:410px;top:542.04px;font-size:11px;font-weight:normal;color:#000;line-height:12.65px;width:73px;text-align:left;overflow:hidden;">6627</div>
<div class="t" style="left:485px;top:542.04px;font-size:11px;font-weight:normal;color:#000;line-height:12.65px;width:73px;text-align:left;overflow:hidden;">1A</div>
<div class="t" style="left:560px;top:542.04px;font-size:11px;font-weight:normal;color:#000;line-height:12.65px;width:73px;text-align:left;overflow:hidden;">0</div>
<div class="t" style="left:635px;top:542.04px;font-size:11px;font-weight:normal;color:#000;line-height:12.65px;width:73px;text-align:left;overflow:hidden;">0</div>
<div class="t" style="left:710px;top:542.04px;font-size:11px;font-weight:normal;color:#000;line-height:12.65px;width:73px;text-align:left;overflow:hidden;">256</div>
<div class="t" style="left:785px;top:542.04px;font-size:11px;font-weight:normal;color:#000;line-height:12.65px;width:81px;text-align:left;overflow:hidden;">6</div>
<div class="t" style="left:868px;top:542.04px;font-size:11px;font-weight:normal;color:#000;line-height:12.65px;width:73px;text-align:left;overflow:hidden;">28</div>
<div class="t" style="left:943px;top:542.04px;font-size:11px;font-weight:normal;color:#000;line-height:12.65px;width:73px;text-align:left;overflow:hidden;">0</div>
<div class="t" style="left:1018px;top:542.04px;font-size:11px;font-weight:normal;color:#000;line-height:12.65px;width:73px;text-align:left;overflow:hidden;">0</div>
<div class="t" style="left:1093px;top:542.04px;font-size:11px;font-weight:normal;color:#000;line-height:12.65px;width:73px;text-align:left;overflow:hidden;">0</div>
<div class="t" style="left:20px;top:560.04px;font-size:11px;font-weight:normal;color:#000;line-height:12.65px;width:143px;text-align:left;overflow:hidden;">White1</div>
<div class="t" style="left:165px;top:560.04px;font-size:11px;font-weight:normal;color:#000;line-height:12.65px;width:93px;text-align:left;overflow:hidden;">WhiteNoise</div>
<div class="t" style="left:260px;top:560.04px;font-size:11px;font-weight:normal;color:#000;line-height:12.65px;width:73px;text-align:left;overflow:hidden;">0.0186</div>
<div class="t" style="left:335px;top:560.04px;font-size:11px;font-weight:normal;color:#000;line-height:12.65px;width:73px;text-align:left;overflow:hidden;">0.5441</div>
<div class="t" style="left:410px;top:560.04px;font-size:11px;font-weight:normal;color:#000;line-height:12.65px;width:73px;text-align:left;overflow:hidden;">2902</div>
<div class="t" style="left:485px;top:560.04px;font-size:11px;font-weight:normal;color:#000;line-height:12.65px;width:73px;text-align:left;overflow:hidden;">1A</div>
<div class="t" style="left:560px;top:560.04px;font-size:11px;font-weight:normal;color:#000;line-height:12.65px;width:73px;text-align:left;overflow:hidden;">0</div>
<div class="t" style="left:635px;top:560.04px;font-size:11px;font-weight:normal;color:#000;line-height:12.65px;width:73px;text-align:left;overflow:hidden;">0</div>
<div class="t" style="left:710px;top:560.04px;font-size:11px;font-weight:normal;color:#000;line-height:12.65px;width:73px;text-align:left;overflow:hidden;">256</div>
<div class="t" style="left:785px;top:560.04px;font-size:11px;font-weight:normal;color:#000;line-height:12.65px;width:81px;text-align:left;overflow:hidden;">1</div>
<div class="t" style="left:868px;top:560.04px;font-size:11px;font-weight:normal;color:#000;line-height:12.65px;width:73px;text-align:left;overflow:hidden;">56</div>
<div class="t" style="left:943px;top:560.04px;font-size:11px;font-weight:normal;color:#000;line-height:12.65px;width:73px;text-align:left;overflow:hidden;">0</div>
<div class="t" style="left:1018px;top:560.04px;font-size:11px;font-weight:normal;color:#000;line-height:12.65px;width:73px;text-align:left;overflow:hidden;">0</div>
<div class="t" style="left:1093px;top:560.04px;font-size:11px;font-weight:normal;color:#000;line-height:12.65px;width:73px;text-align:left;overflow:hidden;">0</div>
<div class="r" style="left:1167px;top:322px;width:17px;height:251px;background:#f0f0f0;"></div>
<div class="r" style="left:1166px;top:342px;width:2px;height:231px;background:#f8f8f8;"></div>
<div class="r" style="left:1175px;top:359px;width:2px;height:40px;background:#8a8a8a;border-radius:1px;"></div>
</div>
<div class="r" style="left:18px;top:573px;width:1167px;height:1px;background:#828790;"></div>
<div class="clip" style="left:0;top:0;width:1205px;height:753px;">
<div class="r" style="left:18px;top:594px;width:1167px;height:160px;background:#fff;box-shadow:inset 0 0 0 1px #828790;"></div>
<div class="r" style="left:20px;top:632px;width:824px;height:19px;background:#eeeeee;"></div>
<div class="r" style="left:20px;top:668px;width:824px;height:19px;background:#eeeeee;"></div>
<div class="r" style="left:20px;top:704px;width:824px;height:19px;background:#eeeeee;"></div>
<div class="r" style="left:20px;top:740px;width:824px;height:13px;background:#eeeeee;"></div>
<div class="r" style="left:93px;top:615px;width:1px;height:138px;background:#f0f0f0;"></div>
<div class="r" style="left:168px;top:615px;width:1px;height:138px;background:#f0f0f0;"></div>
<div class="r" style="left:243px;top:615px;width:1px;height:138px;background:#f0f0f0;"></div>
<div class="r" style="left:318px;top:615px;width:1px;height:138px;background:#f0f0f0;"></div>
<div class="r" style="left:393px;top:615px;width:1px;height:138px;background:#f0f0f0;"></div>
<div class="r" style="left:468px;top:615px;width:1px;height:138px;background:#f0f0f0;"></div>
<div class="r" style="left:543px;top:615px;width:1px;height:138px;background:#f0f0f0;"></div>
<div class="r" style="left:618px;top:615px;width:1px;height:138px;background:#f0f0f0;"></div>
<div class="r" style="left:693px;top:615px;width:1px;height:138px;background:#f0f0f0;"></div>
<div class="r" style="left:768px;top:615px;width:1px;height:138px;background:#f0f0f0;"></div>
<div class="r" style="left:843px;top:615px;width:1px;height:138px;background:#f0f0f0;"></div>
<div class="r" style="left:19px;top:595px;width:825px;height:19px;background:#f0f0f0;"></div>
<div class="r" style="left:19px;top:614px;width:825px;height:1px;background:#828790;"></div>
<div class="r" style="left:93px;top:595px;width:1px;height:19px;background:#a0a0a0;"></div>
<div class="r" style="left:168px;top:595px;width:1px;height:19px;background:#a0a0a0;"></div>
<div class="r" style="left:243px;top:595px;width:1px;height:19px;background:#a0a0a0;"></div>
<div class="r" style="left:318px;top:595px;width:1px;height:19px;background:#a0a0a0;"></div>
<div class="r" style="left:393px;top:595px;width:1px;height:19px;background:#a0a0a0;"></div>
<div class="r" style="left:468px;top:595px;width:1px;height:19px;background:#a0a0a0;"></div>
<div class="r" style="left:543px;top:595px;width:1px;height:19px;background:#a0a0a0;"></div>
<div class="r" style="left:618px;top:595px;width:1px;height:19px;background:#a0a0a0;"></div>
<div class="r" style="left:693px;top:595px;width:1px;height:19px;background:#a0a0a0;"></div>
<div class="r" style="left:768px;top:595px;width:1px;height:19px;background:#a0a0a0;"></div>
<div class="r" style="left:843px;top:595px;width:1px;height:19px;background:#a0a0a0;"></div>
<div class="t" style="left:19px;top:600.14px;font-size:12px;font-weight:normal;color:#000;line-height:13.80px;width:74px;text-align:center;overflow:hidden;-webkit-text-stroke:0;">Index</div>
<div class="t" style="left:94px;top:600.14px;font-size:12px;font-weight:normal;color:#000;line-height:13.80px;width:74px;text-align:center;overflow:hidden;-webkit-text-stroke:0;">Type</div>
<div class="t" style="left:169px;top:600.14px;font-size:12px;font-weight:normal;color:#000;line-height:13.80px;width:74px;text-align:center;overflow:hidden;-webkit-text-stroke:0;"># Channels</div>
<div class="t" style="left:244px;top:600.14px;font-size:12px;font-weight:normal;color:#000;line-height:13.80px;width:74px;text-align:center;overflow:hidden;-webkit-text-stroke:0;">Block Size</div>
<div class="t" style="left:319px;top:600.14px;font-size:12px;font-weight:normal;color:#000;line-height:13.80px;width:74px;text-align:center;overflow:hidden;-webkit-text-stroke:0;">isComplex</div>
<div class="t" style="left:394px;top:600.14px;font-size:12px;font-weight:normal;color:#000;line-height:13.80px;width:74px;text-align:center;overflow:hidden;-webkit-text-stroke:0;">Clk Divider</div>
<div class="t" style="left:469px;top:600.14px;font-size:12px;font-weight:normal;color:#000;line-height:13.80px;width:74px;text-align:center;overflow:hidden;-webkit-text-stroke:0;">InstanceID</div>
<div class="t" style="left:544px;top:600.14px;font-size:12px;font-weight:normal;color:#000;line-height:13.80px;width:74px;text-align:center;overflow:hidden;-webkit-text-stroke:0;">Fast Heap</div>
<div class="t" style="left:619px;top:600.14px;font-size:12px;font-weight:normal;color:#000;line-height:13.80px;width:74px;text-align:center;overflow:hidden;-webkit-text-stroke:0;">Fast Heap B</div>
<div class="t" style="left:694px;top:600.14px;font-size:12px;font-weight:normal;color:#000;line-height:13.80px;width:74px;text-align:center;overflow:hidden;-webkit-text-stroke:0;">Slow Heap</div>
<div class="t" style="left:769px;top:600.14px;font-size:12px;font-weight:normal;color:#000;line-height:13.80px;width:74px;text-align:center;overflow:hidden;-webkit-text-stroke:0;">Shared Heap</div>
<div class="t" style="left:20px;top:617.04px;font-size:11px;font-weight:normal;color:#000;line-height:12.65px;width:73px;text-align:left;overflow:hidden;">1</div>
<div class="t" style="left:95px;top:617.04px;font-size:11px;font-weight:normal;color:#000;line-height:12.65px;width:73px;text-align:left;overflow:hidden;">Input</div>
<div class="t" style="left:170px;top:617.04px;font-size:11px;font-weight:normal;color:#000;line-height:12.65px;width:73px;text-align:left;overflow:hidden;">6</div>
<div class="t" style="left:245px;top:617.04px;font-size:11px;font-weight:normal;color:#000;line-height:12.65px;width:73px;text-align:left;overflow:hidden;">256</div>
<div class="t" style="left:320px;top:617.04px;font-size:11px;font-weight:normal;color:#000;line-height:12.65px;width:73px;text-align:left;overflow:hidden;">0</div>
<div class="t" style="left:395px;top:617.04px;font-size:11px;font-weight:normal;color:#000;line-height:12.65px;width:73px;text-align:left;overflow:hidden;">1A</div>
<div class="t" style="left:470px;top:617.04px;font-size:11px;font-weight:normal;color:#000;line-height:12.65px;width:73px;text-align:left;overflow:hidden;">0</div>
<div class="t" style="left:545px;top:617.04px;font-size:11px;font-weight:normal;color:#000;line-height:12.65px;width:73px;text-align:left;overflow:hidden;">3082</div>
<div class="t" style="left:620px;top:617.04px;font-size:11px;font-weight:normal;color:#000;line-height:12.65px;width:73px;text-align:left;overflow:hidden;">0</div>
<div class="t" style="left:695px;top:617.04px;font-size:11px;font-weight:normal;color:#000;line-height:12.65px;width:73px;text-align:left;overflow:hidden;">15</div>
<div class="t" style="left:770px;top:617.04px;font-size:11px;font-weight:normal;color:#000;line-height:12.65px;width:73px;text-align:left;overflow:hidden;">0</div>
<div class="t" style="left:20px;top:635.04px;font-size:11px;font-weight:normal;color:#000;line-height:12.65px;width:73px;text-align:left;overflow:hidden;">2</div>
<div class="t" style="left:95px;top:635.04px;font-size:11px;font-weight:normal;color:#000;line-height:12.65px;width:73px;text-align:left;overflow:hidden;">Output</div>
<div class="t" style="left:170px;top:635.04px;font-size:11px;font-weight:normal;color:#000;line-height:12.65px;width:73px;text-align:left;overflow:hidden;">1</div>
<div class="t" style="left:245px;top:635.04px;font-size:11px;font-weight:normal;color:#000;line-height:12.65px;width:73px;text-align:left;overflow:hidden;">256</div>
<div class="t" style="left:320px;top:635.04px;font-size:11px;font-weight:normal;color:#000;line-height:12.65px;width:73px;text-align:left;overflow:hidden;">0</div>
<div class="t" style="left:395px;top:635.04px;font-size:11px;font-weight:normal;color:#000;line-height:12.65px;width:73px;text-align:left;overflow:hidden;">1A</div>
<div class="t" style="left:470px;top:635.04px;font-size:11px;font-weight:normal;color:#000;line-height:12.65px;width:73px;text-align:left;overflow:hidden;">0</div>
<div class="t" style="left:545px;top:635.04px;font-size:11px;font-weight:normal;color:#000;line-height:12.65px;width:73px;text-align:left;overflow:hidden;">522</div>
<div class="t" style="left:620px;top:635.04px;font-size:11px;font-weight:normal;color:#000;line-height:12.65px;width:73px;text-align:left;overflow:hidden;">0</div>
<div class="t" style="left:695px;top:635.04px;font-size:11px;font-weight:normal;color:#000;line-height:12.65px;width:73px;text-align:left;overflow:hidden;">15</div>
<div class="t" style="left:770px;top:635.04px;font-size:11px;font-weight:normal;color:#000;line-height:12.65px;width:73px;text-align:left;overflow:hidden;">0</div>
<div class="t" style="left:20px;top:653.04px;font-size:11px;font-weight:normal;color:#000;line-height:12.65px;width:73px;text-align:left;overflow:hidden;">3</div>
<div class="t" style="left:95px;top:653.04px;font-size:11px;font-weight:normal;color:#000;line-height:12.65px;width:73px;text-align:left;overflow:hidden;">Scratch</div>
<div class="t" style="left:170px;top:653.04px;font-size:11px;font-weight:normal;color:#000;line-height:12.65px;width:73px;text-align:left;overflow:hidden;">6</div>
<div class="t" style="left:245px;top:653.04px;font-size:11px;font-weight:normal;color:#000;line-height:12.65px;width:73px;text-align:left;overflow:hidden;">256</div>
<div class="t" style="left:320px;top:653.04px;font-size:11px;font-weight:normal;color:#000;line-height:12.65px;width:73px;text-align:left;overflow:hidden;">0</div>
<div class="t" style="left:395px;top:653.04px;font-size:11px;font-weight:normal;color:#000;line-height:12.65px;width:73px;text-align:left;overflow:hidden;">1A</div>
<div class="t" style="left:470px;top:653.04px;font-size:11px;font-weight:normal;color:#000;line-height:12.65px;width:73px;text-align:left;overflow:hidden;">0</div>
<div class="t" style="left:545px;top:653.04px;font-size:11px;font-weight:normal;color:#000;line-height:12.65px;width:73px;text-align:left;overflow:hidden;">1541</div>
<div class="t" style="left:620px;top:653.04px;font-size:11px;font-weight:normal;color:#000;line-height:12.65px;width:73px;text-align:left;overflow:hidden;">0</div>
<div class="t" style="left:695px;top:653.04px;font-size:11px;font-weight:normal;color:#000;line-height:12.65px;width:73px;text-align:left;overflow:hidden;">15</div>
<div class="t" style="left:770px;top:653.04px;font-size:11px;font-weight:normal;color:#000;line-height:12.65px;width:73px;text-align:left;overflow:hidden;">0</div>
<div class="t" style="left:20px;top:671.04px;font-size:11px;font-weight:normal;color:#000;line-height:12.65px;width:73px;text-align:left;overflow:hidden;">4</div>
<div class="t" style="left:95px;top:671.04px;font-size:11px;font-weight:normal;color:#000;line-height:12.65px;width:73px;text-align:left;overflow:hidden;">Scratch</div>
<div class="t" style="left:170px;top:671.04px;font-size:11px;font-weight:normal;color:#000;line-height:12.65px;width:73px;text-align:left;overflow:hidden;">1</div>
<div class="t" style="left:245px;top:671.04px;font-size:11px;font-weight:normal;color:#000;line-height:12.65px;width:73px;text-align:left;overflow:hidden;">256</div>
<div class="t" style="left:320px;top:671.04px;font-size:11px;font-weight:normal;color:#000;line-height:12.65px;width:73px;text-align:left;overflow:hidden;">0</div>
<div class="t" style="left:395px;top:671.04px;font-size:11px;font-weight:normal;color:#000;line-height:12.65px;width:73px;text-align:left;overflow:hidden;">1A</div>
<div class="t" style="left:470px;top:671.04px;font-size:11px;font-weight:normal;color:#000;line-height:12.65px;width:73px;text-align:left;overflow:hidden;">0</div>
<div class="t" style="left:545px;top:671.04px;font-size:11px;font-weight:normal;color:#000;line-height:12.65px;width:73px;text-align:left;overflow:hidden;">261</div>
<div class="t" style="left:620px;top:671.04px;font-size:11px;font-weight:normal;color:#000;line-height:12.65px;width:73px;text-align:left;overflow:hidden;">0</div>
<div class="t" style="left:695px;top:671.04px;font-size:11px;font-weight:normal;color:#000;line-height:12.65px;width:73px;text-align:left;overflow:hidden;">15</div>
<div class="t" style="left:770px;top:671.04px;font-size:11px;font-weight:normal;color:#000;line-height:12.65px;width:73px;text-align:left;overflow:hidden;">0</div>
<div class="t" style="left:20px;top:689.04px;font-size:11px;font-weight:normal;color:#000;line-height:12.65px;width:73px;text-align:left;overflow:hidden;">5</div>
<div class="t" style="left:95px;top:689.04px;font-size:11px;font-weight:normal;color:#000;line-height:12.65px;width:73px;text-align:left;overflow:hidden;">Scratch</div>
<div class="t" style="left:170px;top:689.04px;font-size:11px;font-weight:normal;color:#000;line-height:12.65px;width:73px;text-align:left;overflow:hidden;">1</div>
<div class="t" style="left:245px;top:689.04px;font-size:11px;font-weight:normal;color:#000;line-height:12.65px;width:73px;text-align:left;overflow:hidden;">256</div>
<div class="t" style="left:320px;top:689.04px;font-size:11px;font-weight:normal;color:#000;line-height:12.65px;width:73px;text-align:left;overflow:hidden;">0</div>
<div class="t" style="left:395px;top:689.04px;font-size:11px;font-weight:normal;color:#000;line-height:12.65px;width:73px;text-align:left;overflow:hidden;">1A</div>
<div class="t" style="left:470px;top:689.04px;font-size:11px;font-weight:normal;color:#000;line-height:12.65px;width:73px;text-align:left;overflow:hidden;">0</div>
<div class="t" style="left:545px;top:689.04px;font-size:11px;font-weight:normal;color:#000;line-height:12.65px;width:73px;text-align:left;overflow:hidden;">261</div>
<div class="t" style="left:620px;top:689.04px;font-size:11px;font-weight:normal;color:#000;line-height:12.65px;width:73px;text-align:left;overflow:hidden;">0</div>
<div class="t" style="left:695px;top:689.04px;font-size:11px;font-weight:normal;color:#000;line-height:12.65px;width:73px;text-align:left;overflow:hidden;">15</div>
<div class="t" style="left:770px;top:689.04px;font-size:11px;font-weight:normal;color:#000;line-height:12.65px;width:73px;text-align:left;overflow:hidden;">0</div>
<div class="t" style="left:20px;top:707.04px;font-size:11px;font-weight:normal;color:#000;line-height:12.65px;width:73px;text-align:left;overflow:hidden;">6</div>
<div class="t" style="left:95px;top:707.04px;font-size:11px;font-weight:normal;color:#000;line-height:12.65px;width:73px;text-align:left;overflow:hidden;">Scratch</div>
<div class="t" style="left:170px;top:707.04px;font-size:11px;font-weight:normal;color:#000;line-height:12.65px;width:73px;text-align:left;overflow:hidden;">1</div>
<div class="t" style="left:245px;top:707.04px;font-size:11px;font-weight:normal;color:#000;line-height:12.65px;width:73px;text-align:left;overflow:hidden;">256</div>
<div class="t" style="left:320px;top:707.04px;font-size:11px;font-weight:normal;color:#000;line-height:12.65px;width:73px;text-align:left;overflow:hidden;">0</div>
<div class="t" style="left:395px;top:707.04px;font-size:11px;font-weight:normal;color:#000;line-height:12.65px;width:73px;text-align:left;overflow:hidden;">1A</div>
<div class="t" style="left:470px;top:707.04px;font-size:11px;font-weight:normal;color:#000;line-height:12.65px;width:73px;text-align:left;overflow:hidden;">0</div>
<div class="t" style="left:545px;top:707.04px;font-size:11px;font-weight:normal;color:#000;line-height:12.65px;width:73px;text-align:left;overflow:hidden;">261</div>
<div class="t" style="left:620px;top:707.04px;font-size:11px;font-weight:normal;color:#000;line-height:12.65px;width:73px;text-align:left;overflow:hidden;">0</div>
<div class="t" style="left:695px;top:707.04px;font-size:11px;font-weight:normal;color:#000;line-height:12.65px;width:73px;text-align:left;overflow:hidden;">15</div>
<div class="t" style="left:770px;top:707.04px;font-size:11px;font-weight:normal;color:#000;line-height:12.65px;width:73px;text-align:left;overflow:hidden;">0</div>
<div class="t" style="left:20px;top:725.04px;font-size:11px;font-weight:normal;color:#000;line-height:12.65px;width:73px;text-align:left;overflow:hidden;">7</div>
<div class="t" style="left:95px;top:725.04px;font-size:11px;font-weight:normal;color:#000;line-height:12.65px;width:73px;text-align:left;overflow:hidden;">Scratch</div>
<div class="t" style="left:170px;top:725.04px;font-size:11px;font-weight:normal;color:#000;line-height:12.65px;width:73px;text-align:left;overflow:hidden;">1</div>
<div class="t" style="left:245px;top:725.04px;font-size:11px;font-weight:normal;color:#000;line-height:12.65px;width:73px;text-align:left;overflow:hidden;">1</div>
<div class="t" style="left:320px;top:725.04px;font-size:11px;font-weight:normal;color:#000;line-height:12.65px;width:73px;text-align:left;overflow:hidden;">0</div>
<div class="t" style="left:395px;top:725.04px;font-size:11px;font-weight:normal;color:#000;line-height:12.65px;width:73px;text-align:left;overflow:hidden;">1A</div>
<div class="t" style="left:470px;top:725.04px;font-size:11px;font-weight:normal;color:#000;line-height:12.65px;width:73px;text-align:left;overflow:hidden;">0</div>
<div class="t" style="left:545px;top:725.04px;font-size:11px;font-weight:normal;color:#000;line-height:12.65px;width:73px;text-align:left;overflow:hidden;">6</div>
<div class="t" style="left:620px;top:725.04px;font-size:11px;font-weight:normal;color:#000;line-height:12.65px;width:73px;text-align:left;overflow:hidden;">0</div>
<div class="t" style="left:695px;top:725.04px;font-size:11px;font-weight:normal;color:#000;line-height:12.65px;width:73px;text-align:left;overflow:hidden;">15</div>
<div class="t" style="left:770px;top:725.04px;font-size:11px;font-weight:normal;color:#000;line-height:12.65px;width:73px;text-align:left;overflow:hidden;">0</div>
<div class="t" style="left:20px;top:743.04px;font-size:11px;font-weight:normal;color:#000;line-height:12.65px;width:73px;text-align:left;overflow:hidden;">8</div>
<div class="t" style="left:95px;top:743.04px;font-size:11px;font-weight:normal;color:#000;line-height:12.65px;width:73px;text-align:left;overflow:hidden;">Scratch</div>
<div class="t" style="left:170px;top:743.04px;font-size:11px;font-weight:normal;color:#000;line-height:12.65px;width:73px;text-align:left;overflow:hidden;">1</div>
<div class="t" style="left:245px;top:743.04px;font-size:11px;font-weight:normal;color:#000;line-height:12.65px;width:73px;text-align:left;overflow:hidden;">256</div>
<div class="t" style="left:320px;top:743.04px;font-size:11px;font-weight:normal;color:#000;line-height:12.65px;width:73px;text-align:left;overflow:hidden;">0</div>
<div class="t" style="left:395px;top:743.04px;font-size:11px;font-weight:normal;color:#000;line-height:12.65px;width:73px;text-align:left;overflow:hidden;">1A</div>
<div class="t" style="left:470px;top:743.04px;font-size:11px;font-weight:normal;color:#000;line-height:12.65px;width:73px;text-align:left;overflow:hidden;">0</div>
<div class="t" style="left:545px;top:743.04px;font-size:11px;font-weight:normal;color:#000;line-height:12.65px;width:73px;text-align:left;overflow:hidden;">261</div>
<div class="t" style="left:620px;top:743.04px;font-size:11px;font-weight:normal;color:#000;line-height:12.65px;width:73px;text-align:left;overflow:hidden;">0</div>
<div class="t" style="left:695px;top:743.04px;font-size:11px;font-weight:normal;color:#000;line-height:12.65px;width:73px;text-align:left;overflow:hidden;">15</div>
<div class="t" style="left:770px;top:743.04px;font-size:11px;font-weight:normal;color:#000;line-height:12.65px;width:73px;text-align:left;overflow:hidden;">0</div>
<div class="r" style="left:1167px;top:595px;width:17px;height:158px;background:#f0f0f0;"></div>
<div class="r" style="left:1166px;top:615px;width:2px;height:138px;background:#f8f8f8;"></div>
<div class="r" style="left:1175px;top:632px;width:2px;height:31px;background:#8a8a8a;border-radius:1px;"></div>
</div>
<div class="r" style="left:18px;top:753px;width:1167px;height:1px;background:#828790;"></div>
<div class="r" style="left:739px;top:783px;width:206px;height:26px;background:#fdfdfd;border:1px solid #d0d0d0;border-bottom-color:#b8b8b8;border-radius:4px;"></div>
<div class="t" style="left:739px;top:792.04px;font-size:11px;font-weight:normal;color:#000;line-height:12.65px;width:208px;text-align:center;overflow:hidden;">Refresh</div>
<div class="r" style="left:978px;top:783px;width:205px;height:26px;background:#fdfdfd;border:1px solid #d0d0d0;border-bottom-color:#b8b8b8;border-radius:4px;"></div>
<div class="t" style="left:978px;top:792.04px;font-size:11px;font-weight:normal;color:#000;line-height:12.65px;width:207px;text-align:center;overflow:hidden;">Export to File...</div>
</body></html>
